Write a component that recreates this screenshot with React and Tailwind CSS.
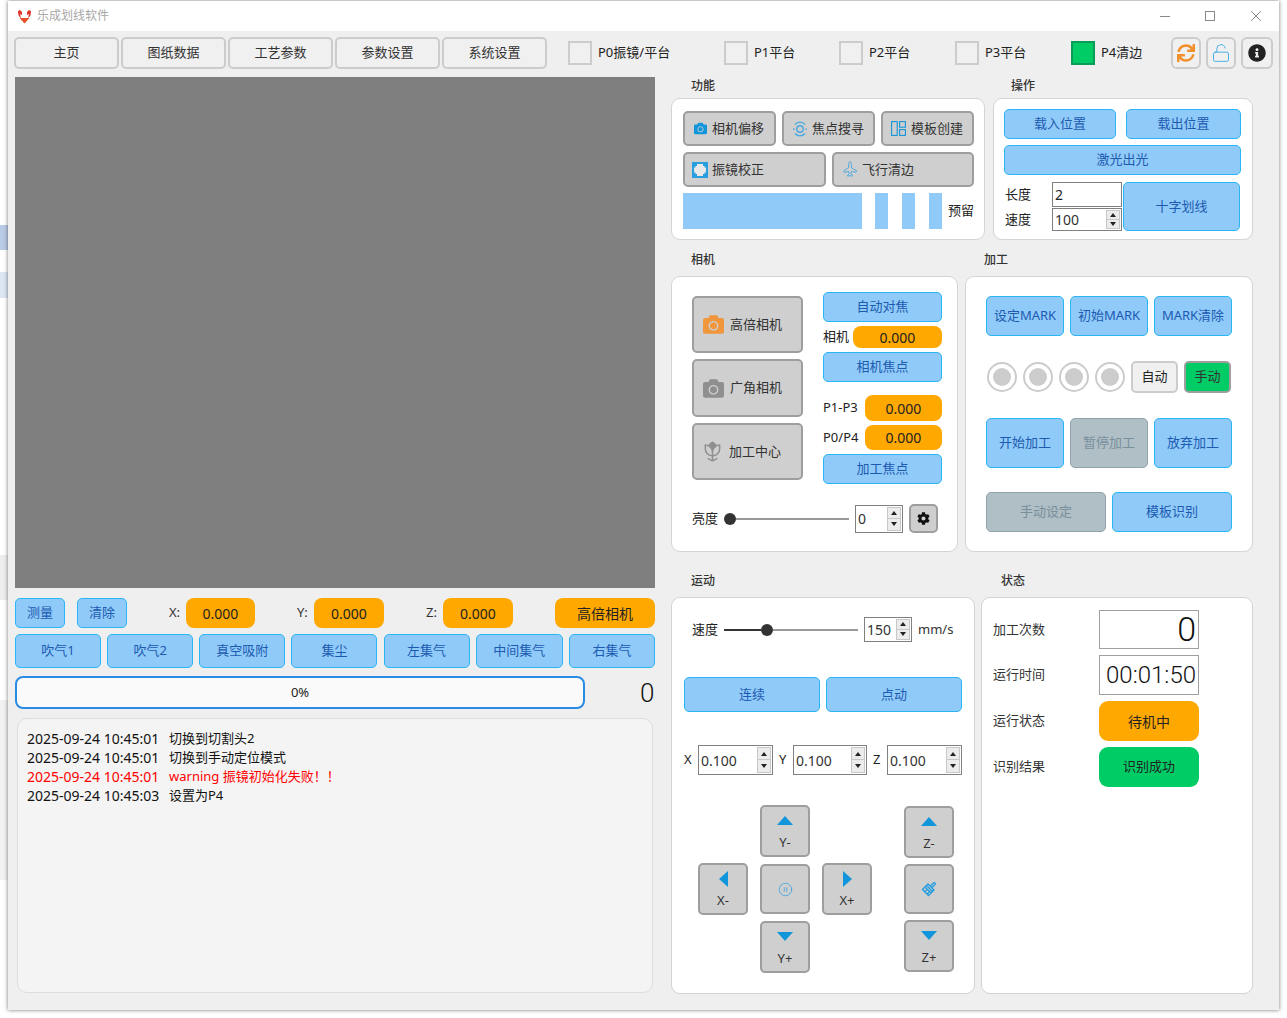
import React from "react";
import { CirclePause, LockOpen, Plane } from "lucide-react";
import { FaCamera, FaCog, FaInfoCircle, FaSync } from "react-icons/fa";
import { PiFlowerTulipFill } from "react-icons/pi";

const fontStack = { fontFamily: '"Noto Sans", "Noto Sans CJK SC", sans-serif' };

const BlueBtn = ({ className = "", children }) => (
  <div className={`flex items-center justify-center rounded-[5px] border border-[#29b6f6] bg-[#90caf9] text-[13px] text-[#1c5bb0] ${className}`}>
    {children}
  </div>
);

const GrayBtn = ({ className = "", children }) => (
  <div className={`flex items-center rounded-[5px] border-2 border-[#9e9e9e] bg-[#cfcfcf] text-[13px] text-[#333333] ${className}`}>
    {children}
  </div>
);

const DisabledBtn = ({ className = "", children }) => (
  <div className={`flex items-center justify-center rounded-[5px] border border-[#90a4ae] bg-[#b0bec5] text-[13px] text-[#78909c] ${className}`}>
    {children}
  </div>
);

const OrangeBox = ({ className = "", children }) => (
  <div className={`flex items-center justify-center rounded-[8px] bg-[#ffa800] text-[14px] text-[#222222] ${className}`}>
    {children}
  </div>
);

const ToolBtn = ({ children }) => (
  <div className="flex h-[32px] w-[105px] items-center justify-center rounded-[5px] border-2 border-[#cccccc] bg-[#f0f0f0] text-[13px] text-[#333333]">
    {children}
  </div>
);

const Check = ({ label, className = "", on = false }) => (
  <div className={`flex items-center ${className}`}>
    <div className={on ? "h-[24px] w-[24px] border-2 border-[#0a9b55] bg-[#00cc66]" : "h-[24px] w-[24px] border-2 border-[#cccccc] bg-[#f0f0f0]"} />
    <span className="ml-[6px] text-[13px] text-[#222222]">{label}</span>
  </div>
);

const IconBtn = ({ className = "", children }) => (
  <div className={`flex h-[32px] items-center justify-center rounded-[6px] border-2 border-[#cccccc] bg-[#f0f0f0] ${className}`}>
    {children}
  </div>
);

const Spin = ({ value, className = "" }) => (
  <div className={`flex items-center border border-[#808080] bg-white pl-[2px] pr-[1px] text-[14px] text-[#333333] ${className}`}>
    <span className="flex-1">{value}</span>
    <div className="flex h-full flex-col justify-center py-[1px]">
      <div className="flex h-1/2 w-[14px] items-center justify-center border border-[#c8c8c8] bg-[#ececec]">
        <div className="h-0 w-0 border-x-[3px] border-b-[4px] border-x-transparent border-b-[#222222]" />
      </div>
      <div className="flex h-1/2 w-[14px] items-center justify-center border border-t-0 border-[#c8c8c8] bg-[#ececec]">
        <div className="h-0 w-0 border-x-[3px] border-t-[4px] border-x-transparent border-t-[#222222]" />
      </div>
    </div>
  </div>
);

const Radio = () => (
  <div className="flex h-[30px] w-[30px] items-center justify-center rounded-full border-2 border-[#cccccc] bg-white">
    <div className="h-[18px] w-[18px] rounded-full bg-[#cccccc]" />
  </div>
);

const Lcd = ({ className = "", children }) => (
  <div className={`flex w-[100px] items-center justify-end overflow-hidden border border-[#a0a0a0] bg-white pr-[2px] font-light text-[#111111] ${className}`} style={{ fontFamily: "Roboto, sans-serif" }}>
    {children}
  </div>
);

const Title = ({ className = "", children }) => (
  <div className={`text-[12px] font-medium text-[#333333] ${className}`}>{children}</div>
);

const Panel = ({ className = "", children }) => (
  <div className={`rounded-[9px] border border-[#d4d4d4] bg-white ${className}`}>{children}</div>
);

const Arrow = ({ dir }) => {
  const points = {
    up: "0,9 7,0 15,0 15,0 8,0 16,9",
    down: "0,0 16,0 8,9",
    left: "9,0 9,16 0,8",
    right: "0,0 9,8 0,16",
  };
  return (
    <svg width={dir === "up" || dir === "down" ? 16 : 9} height={dir === "up" || dir === "down" ? 9 : 16}>
      <polygon points={dir === "up" ? "8,0 16,9 0,9" : points[dir]} fill="#1296db" />
    </svg>
  );
};

const PadBtn = ({ className = "", dir, label, children }) => (
  <GrayBtn className={`w-[50px] flex-col justify-center ${className}`}>
    {dir && (
      <div className="flex h-[16px] items-center">
        <Arrow dir={dir} />
      </div>
    )}
    {label && <span className="mt-[5px] text-[13px] leading-[16px]">{label}</span>}
    {children}
  </GrayBtn>
);

const SliderTrack = ({ className = "", before, after }) => (
  <div className={`flex items-center ${className}`}>
    <div className={`h-[2px] bg-[#333333] ${before}`} />
    <div className="h-[12px] w-[12px] shrink-0 rounded-full bg-[#333333]" />
    <div className={`h-[2px] bg-[#999999] ${after}`} />
  </div>
);

const FocusIcon = () => (
  <svg width="16" height="16" viewBox="0 0 16 16" fill="none" stroke="#4aa8e0">
    <circle cx="8" cy="8" r="3.2" strokeWidth="1.4" />
    <path d="M3 3.5A6.5 6.5 0 0 1 13 3.5M3 12.5A6.5 6.5 0 0 0 13 12.5" strokeWidth="1.4" />
    <path d="M1 8h1.5M13.5 8H15" strokeWidth="1.4" />
  </svg>
);

const TemplateIcon = () => (
  <svg width="15" height="15" viewBox="0 0 15 15" fill="none" stroke="#1296db" strokeWidth="1.1">
    <rect x="0.6" y="0.6" width="5.6" height="13.8" />
    <rect x="8.6" y="0.6" width="5.8" height="5.6" />
    <rect x="8.6" y="8.6" width="5.8" height="5.8" />
  </svg>
);

const GalvoIcon = () => (
  <svg width="16" height="16" viewBox="0 0 16 16">
    <rect width="16" height="16" fill="#2a9fe0" />
    <path d="M5 2h6v2h1.500v1.500H14v5h-1.500V12H11v2H5v-2H3.500v-1.500H2v-5h1.500V4H5z" fill="#e8e8e8" />
  </svg>
);

const BrushIcon = () => (
  <svg width="16" height="16" viewBox="0 0 16 16" fill="none" stroke="#1e9be0" strokeWidth="1.300">
    <path d="M1.500 8.500 7 3l6 6-5.500 5.500zM4 6l6 6M5.500 4.500l6 6M3.800 10.800l2-2M6 13l2-2" />
    <path d="M9.500 5 12.500 2a1 1 0 0 1 1.500 1.500L11 6.500" />
  </svg>
);

const Logo = () => (
  <svg width="15" height="15" viewBox="0 0 15 15">
    <path d="M1 2c0 4 1 6 3 7l-1-4 2 1V3L3 1zM14 2c0 4-1 6-3 7l1-4-2 1V3l2-2z" fill="#e2352a" />
    <path d="M2.500 9h10L7.500 14.500z" fill="#e8502a" />
  </svg>
);

const WinControls = () => (
  <div className="ml-auto flex items-center pr-[17px]">
    <svg width="12" height="12" stroke="#888888" fill="none"><path d="M1 6.500h10" /></svg>
    <svg className="ml-[33px]" width="12" height="12" stroke="#888888" fill="none"><rect x="1.500" y="1.500" width="9" height="9" /></svg>
    <svg className="ml-[34px]" width="12" height="12" stroke="#888888" fill="none"><path d="M1 1l10 10M11 1 1 11" /></svg>
  </div>
);

const logs = [
  { time: "2025-09-24 10:45:01", text: "切换到切割头2" },
  { time: "2025-09-24 10:45:01", text: "切换到手动定位模式" },
  { time: "2025-09-24 10:45:01", text: "warning 振镜初始化失败！！", red: true },
  { time: "2025-09-24 10:45:03", text: "设置为P4" },
];

const airButtons = [
  { label: "吹气1", width: "w-[86px]" },
  { label: "吹气2", width: "w-[86px]" },
  { label: "真空吸附", width: "w-[86px]" },
  { label: "集尘", width: "w-[86px]" },
  { label: "左集气", width: "w-[86px]" },
  { label: "中间集气", width: "w-[87px]" },
  { label: "右集气", width: "w-[86px]" },
];

export default function App() {
  return (
    <div className="flex h-[1018px] w-[1287px] overflow-hidden bg-white" style={fontStack}>
      {/* desktop behind the window */}
      <div className="flex w-[8px] shrink-0 flex-col">
        <div className="h-[225px]" />
        <div className="h-[25px] bg-[#b9cbe5]" />
        <div className="h-[22px]" />
        <div className="h-[26px] bg-[#dde7f3]" />
        <div className="h-[257px]" />
        <div className="h-[45px] bg-[#eeeeee]" />
        <div className="h-[100px]" />
        <div className="h-[180px] bg-[#f2f2f2]" />
      </div>

      <div className="flex h-[1009px] w-[1271px] shrink-0 flex-col bg-[#efefef] mt-[1px] shadow-[0_0_4px_rgba(0,0,0,0.55)]">
        {/* title bar */}
        <div className="flex h-[30px] items-center bg-white pl-[9px]">
          <Logo />
          <span className="ml-[5px] text-[12px] text-[#a8a8a8]">乐成划线软件</span>
          <WinControls />
        </div>

        {/* toolbar */}
        <div className="ml-[6px] mt-[6px] flex h-[32px] items-center">
          <div className="flex gap-[2px]">
            <ToolBtn>主页</ToolBtn>
            <ToolBtn>图纸数据</ToolBtn>
            <ToolBtn>工艺参数</ToolBtn>
            <ToolBtn>参数设置</ToolBtn>
            <ToolBtn>系统设置</ToolBtn>
          </div>
          <Check className="ml-[21px] w-[156px]" label="P0振镜/平台" />
          <Check className="w-[115px]" label="P1平台" />
          <Check className="w-[116px]" label="P2平台" />
          <Check className="w-[116px]" label="P3平台" />
          <Check className="w-[100px]" label="P4清边" on />
          <IconBtn className="w-[30px]">
            <FaSync size={18} color="#f0902a" />
          </IconBtn>
          <IconBtn className="ml-[5px] w-[30px]">
            <LockOpen size={20} color="#4ab0e8" strokeWidth={1.2} />
          </IconBtn>
          <IconBtn className="ml-[5px] w-[32px]">
            <FaInfoCircle size={18} color="#222222" />
          </IconBtn>
        </div>

        <div className="ml-[7px] mt-[8px] flex">
          {/* left column */}
          <div className="w-[640px] shrink-0">
            <div className="h-[511px] bg-[#7f7f7f]" />

            <div className="mt-[10px] flex h-[30px] items-center">
              <BlueBtn className="h-[30px] w-[50px]">测量</BlueBtn>
              <BlueBtn className="ml-[12px] h-[30px] w-[50px]">清除</BlueBtn>
              <span className="ml-[42px] w-[17px] text-[13px] text-[#333333]">X:</span>
              <OrangeBox className="h-[30px] w-[69px]">0.000</OrangeBox>
              <span className="ml-[42px] w-[17px] text-[13px] text-[#333333]">Y:</span>
              <OrangeBox className="h-[30px] w-[70px]">0.000</OrangeBox>
              <span className="ml-[42px] w-[17px] text-[13px] text-[#333333]">Z:</span>
              <OrangeBox className="h-[30px] w-[70px]">0.000</OrangeBox>
              <OrangeBox className="ml-[42px] h-[30px] w-[100px] text-[13px]">高倍相机</OrangeBox>
            </div>

            <div className="mt-[6px] flex h-[34px] justify-between">
              {airButtons.map((item) => (
                <BlueBtn key={item.label} className={`h-[34px] ${item.width}`}>
                  {item.label}
                </BlueBtn>
              ))}
            </div>

            <div className="mt-[8px] flex h-[33px] items-center">
              <div className="flex h-[33px] w-[570px] items-center justify-center rounded-[8px] border-2 border-[#2a8be4] bg-[#fafafa] text-[13px] text-[#222222]">
                0%
              </div>
              <div className="ml-[55px] w-[13px] text-center text-[26px] font-light leading-[26px] text-[#111111]" style={{ fontFamily: "Roboto, sans-serif" }}>
                0
              </div>
            </div>

            <div className="ml-[2px] mt-[9px] h-[275px] w-[636px] rounded-[10px] border border-[#dddddd] bg-[#f4f4f4] pl-[9px] pt-[10px]">
              {logs.map((line, index) => (
                <div key={index} className={line.red ? "flex h-[19px] items-center text-[#ff0000]" : "flex h-[19px] items-center text-[#111111]"}>
                  <span className="w-[142px] text-[14px]">{line.time}</span>
                  <span className="text-[13px]">{line.text}</span>
                </div>
              ))}
            </div>
          </div>

          {/* right column */}
          <div className="ml-[16px] w-[582px] shrink-0">
            <div className="flex h-[21px] items-start">
              <Title className="ml-[20px] w-[320px]">功能</Title>
              <Title>操作</Title>
            </div>
            <div className="flex gap-[8px]">
              <Panel className="h-[142px] w-[314px] pl-[11px] pt-[12px]">
                <div className="flex gap-[6px]">
                  <GrayBtn className="h-[35px] w-[93px] pl-[9px]">
                    <FaCamera size={13} color="#1296db" />
                    <span className="ml-[5px]">相机偏移</span>
                  </GrayBtn>
                  <GrayBtn className="h-[35px] w-[93px] pl-[8px]">
                    <FocusIcon />
                    <span className="ml-[4px]">焦点搜寻</span>
                  </GrayBtn>
                  <GrayBtn className="h-[35px] w-[93px] pl-[8px]">
                    <TemplateIcon />
                    <span className="ml-[5px]">模板创建</span>
                  </GrayBtn>
                </div>
                <div className="mt-[6px] flex gap-[6px]">
                  <GrayBtn className="h-[35px] w-[143px] pl-[7px]">
                    <GalvoIcon />
                    <span className="ml-[4px]">振镜校正</span>
                  </GrayBtn>
                  <GrayBtn className="h-[35px] w-[142px] pl-[8px]">
                    <Plane size={16} color="#3ba5e0" strokeWidth={1.2} className="-rotate-45" />
                    <span className="ml-[4px]">飞行清边</span>
                  </GrayBtn>
                </div>
                <div className="mt-[6px] flex h-[36px] items-center">
                  <div className="h-[36px] w-[179px] bg-[#90caf9]" />
                  <div className="ml-[13px] h-[36px] w-[13px] bg-[#90caf9]" />
                  <div className="ml-[14px] h-[36px] w-[13px] bg-[#90caf9]" />
                  <div className="ml-[14px] h-[36px] w-[13px] bg-[#90caf9]" />
                  <span className="ml-[6px] text-[13px] text-[#222222]">预留</span>
                </div>
              </Panel>

              <Panel className="h-[142px] w-[260px] pl-[10px] pt-[10px]">
                <div className="flex gap-[10px]">
                  <BlueBtn className="h-[30px] w-[112px]">载入位置</BlueBtn>
                  <BlueBtn className="h-[30px] w-[115px]">载出位置</BlueBtn>
                </div>
                <BlueBtn className="mt-[6px] h-[30px] w-[237px]">激光出光</BlueBtn>
                <div className="mt-[7px] flex">
                  <div className="w-[119px]">
                    <div className="flex h-[25px] items-center">
                      <span className="ml-[1px] w-[47px] text-[13px] text-[#222222]">长度</span>
                      <div className="flex h-[25px] w-[70px] items-center border border-[#808080] bg-white pl-[2px] text-[14px] text-[#222222]">2</div>
                    </div>
                    <div className="mt-[1px] flex h-[23px] items-center">
                      <span className="ml-[1px] w-[47px] text-[13px] text-[#222222]">速度</span>
                      <Spin className="h-[23px] w-[70px]" value="100" />
                    </div>
                  </div>
                  <BlueBtn className="h-[49px] w-[117px]">十字划线</BlueBtn>
                </div>
              </Panel>
            </div>

            <div className="flex h-[36px] items-end pb-[7px]">
              <Title className="ml-[20px] w-[293px]">相机</Title>
              <Title>加工</Title>
            </div>
            <div className="flex gap-[7px]">
              <Panel className="h-[276px] w-[287px] pl-[20px] pt-[15px]">
                <div className="flex">
                  <div className="mt-[4px] w-[111px]">
                    <GrayBtn className="h-[57px] pl-[9px]">
                      <FaCamera size={21} color="#f0963c" />
                      <span className="ml-[6px]">高倍相机</span>
                    </GrayBtn>
                    <GrayBtn className="mt-[6px] h-[58px] pl-[9px]">
                      <FaCamera size={21} color="#8f8f8f" />
                      <span className="ml-[6px]">广角相机</span>
                    </GrayBtn>
                    <GrayBtn className="mt-[6px] h-[57px] pl-[7px]">
                      <PiFlowerTulipFill size={23} color="#8f8f8f" />
                      <span className="ml-[5px]">加工中心</span>
                    </GrayBtn>
                  </div>
                  <div className="ml-[20px] w-[119px]">
                    <BlueBtn className="h-[30px]">自动对焦</BlueBtn>
                    <div className="mt-[4px] flex h-[22px] items-center justify-between">
                      <span className="text-[13px] text-[#222222]">相机</span>
                      <OrangeBox className="h-[22px] w-[89px]">0.000</OrangeBox>
                    </div>
                    <BlueBtn className="mt-[4px] h-[30px]">相机焦点</BlueBtn>
                    <div className="mt-[13px] flex h-[26px] items-center justify-between">
                      <span className="text-[13px] text-[#222222]">P1-P3</span>
                      <OrangeBox className="h-[26px] w-[77px]">0.000</OrangeBox>
                    </div>
                    <div className="mt-[4px] flex h-[25px] items-center justify-between">
                      <span className="text-[13px] text-[#222222]">P0/P4</span>
                      <OrangeBox className="h-[25px] w-[77px]">0.000</OrangeBox>
                    </div>
                    <BlueBtn className="mt-[4px] h-[30px]">加工焦点</BlueBtn>
                  </div>
                </div>
                <div className="mt-[20px] flex h-[29px] items-center">
                  <span className="w-[32px] text-[13px] text-[#222222]">亮度</span>
                  <SliderTrack className="w-[125px]" after="flex-1" />
                  <Spin className="ml-[6px] h-[28px] w-[48px]" value="0" />
                  <GrayBtn className="ml-[6px] h-[29px] w-[29px] justify-center">
                    <FaCog size={13} color="#111111" />
                  </GrayBtn>
                </div>
              </Panel>

              <Panel className="h-[276px] w-[288px] pl-[20px] pt-[19px]">
                <div className="flex gap-[6px]">
                  <BlueBtn className="h-[40px] w-[78px]">设定MARK</BlueBtn>
                  <BlueBtn className="h-[40px] w-[78px]">初始MARK</BlueBtn>
                  <BlueBtn className="h-[40px] w-[78px]">MARK清除</BlueBtn>
                </div>
                <div className="ml-[1px] mt-[25px] flex h-[32px] items-center gap-[6px]">
                  <Radio />
                  <Radio />
                  <Radio />
                  <Radio />
                  <div className="flex h-[32px] w-[47px] items-center justify-center rounded-[5px] border-2 border-[#cccccc] bg-[#f0f0f0] text-[13px] text-[#222222]">自动</div>
                  <div className="flex h-[32px] w-[47px] items-center justify-center rounded-[5px] border-2 border-[#9e9e9e] bg-[#00cc66] text-[13px] text-[#333333]">手动</div>
                </div>
                <div className="mt-[25px] flex gap-[6px]">
                  <BlueBtn className="h-[50px] w-[78px]">开始加工</BlueBtn>
                  <DisabledBtn className="h-[50px] w-[78px]">暂停加工</DisabledBtn>
                  <BlueBtn className="h-[50px] w-[78px]">放弃加工</BlueBtn>
                </div>
                <div className="mt-[24px] flex gap-[6px]">
                  <DisabledBtn className="h-[40px] w-[120px]">手动设定</DisabledBtn>
                  <BlueBtn className="h-[40px] w-[120px]">模板识别</BlueBtn>
                </div>
              </Panel>
            </div>

            <div className="flex h-[45px] items-end pb-[7px]">
              <Title className="ml-[20px] w-[310px]">运动</Title>
              <Title>状态</Title>
            </div>
            <div className="flex gap-[6px]">
              <Panel className="h-[397px] w-[304px] pl-[12px] pt-[19px]">
                <div className="flex h-[25px] items-center">
                  <span className="ml-[8px] w-[32px] text-[13px] text-[#222222]">速度</span>
                  <SliderTrack className="w-[134px]" before="w-[37px]" after="flex-1" />
                  <Spin className="ml-[6px] h-[25px] w-[48px]" value="150" />
                  <span className="ml-[6px] text-[13px] text-[#333333]">mm/s</span>
                </div>
                <div className="mt-[35px] flex gap-[6px]">
                  <BlueBtn className="h-[35px] w-[136px]">连续</BlueBtn>
                  <BlueBtn className="h-[35px] w-[136px]">点动</BlueBtn>
                </div>
                <div className="mt-[33px] flex h-[30px] items-center">
                  <span className="w-[14px] text-[13px] text-[#222222]">X</span>
                  <Spin className="h-[30px] w-[75px]" value="0.100" />
                  <span className="ml-[6px] w-[14px] text-[13px] text-[#222222]">Y</span>
                  <Spin className="h-[30px] w-[74px]" value="0.100" />
                  <span className="ml-[6px] w-[14px] text-[13px] text-[#222222]">Z</span>
                  <Spin className="h-[30px] w-[75px]" value="0.100" />
                </div>
                <div className="ml-[14px] mt-[30px] flex">
                  <div className="mt-[58px]">
                    <PadBtn className="h-[52px]" dir="left" label="X-" />
                  </div>
                  <div className="ml-[12px]">
                    <PadBtn className="h-[52px]" dir="up" label="Y-" />
                    <PadBtn className="mt-[7px] h-[50px]">
                      <CirclePause size={15} color="#1e9be0" strokeWidth={1.1} />
                    </PadBtn>
                    <PadBtn className="mt-[7px] h-[52px]" dir="down" label="Y+" />
                  </div>
                  <div className="ml-[12px] mt-[58px]">
                    <PadBtn className="h-[52px]" dir="right" label="X+" />
                  </div>
                  <div className="ml-[32px] mt-[1px]">
                    <PadBtn className="h-[52px]" dir="up" label="Z-" />
                    <PadBtn className="mt-[6px] h-[50px]">
                      <BrushIcon />
                    </PadBtn>
                    <PadBtn className="mt-[6px] h-[52px]" dir="down" label="Z+" />
                  </div>
                </div>
              </Panel>

              <Panel className="h-[397px] w-[272px] pl-[11px] pt-[12px]">
                <div className="flex h-[39px] items-center">
                  <span className="w-[106px] text-[13px] text-[#333333]">加工次数</span>
                  <Lcd className="h-[39px] text-[34px]">0</Lcd>
                </div>
                <div className="mt-[6px] flex h-[40px] items-center">
                  <span className="w-[106px] text-[13px] text-[#333333]">运行时间</span>
                  <Lcd className="h-[40px] text-[24px]">00:01:50</Lcd>
                </div>
                <div className="mt-[6px] flex h-[40px] items-center">
                  <span className="w-[106px] text-[13px] text-[#333333]">运行状态</span>
                  <OrangeBox className="h-[40px] w-[100px] rounded-[9px] text-[13px]">待机中</OrangeBox>
                </div>
                <div className="mt-[6px] flex h-[40px] items-center">
                  <span className="w-[106px] text-[13px] text-[#333333]">识别结果</span>
                  <div className="flex h-[40px] w-[100px] items-center justify-center rounded-[9px] bg-[#00cc66] text-[13px] text-[#222222]">识别成功</div>
                </div>
              </Panel>
            </div>
          </div>
        </div>
      </div>

      <div className="flex-1" />
    </div>
  );
}
